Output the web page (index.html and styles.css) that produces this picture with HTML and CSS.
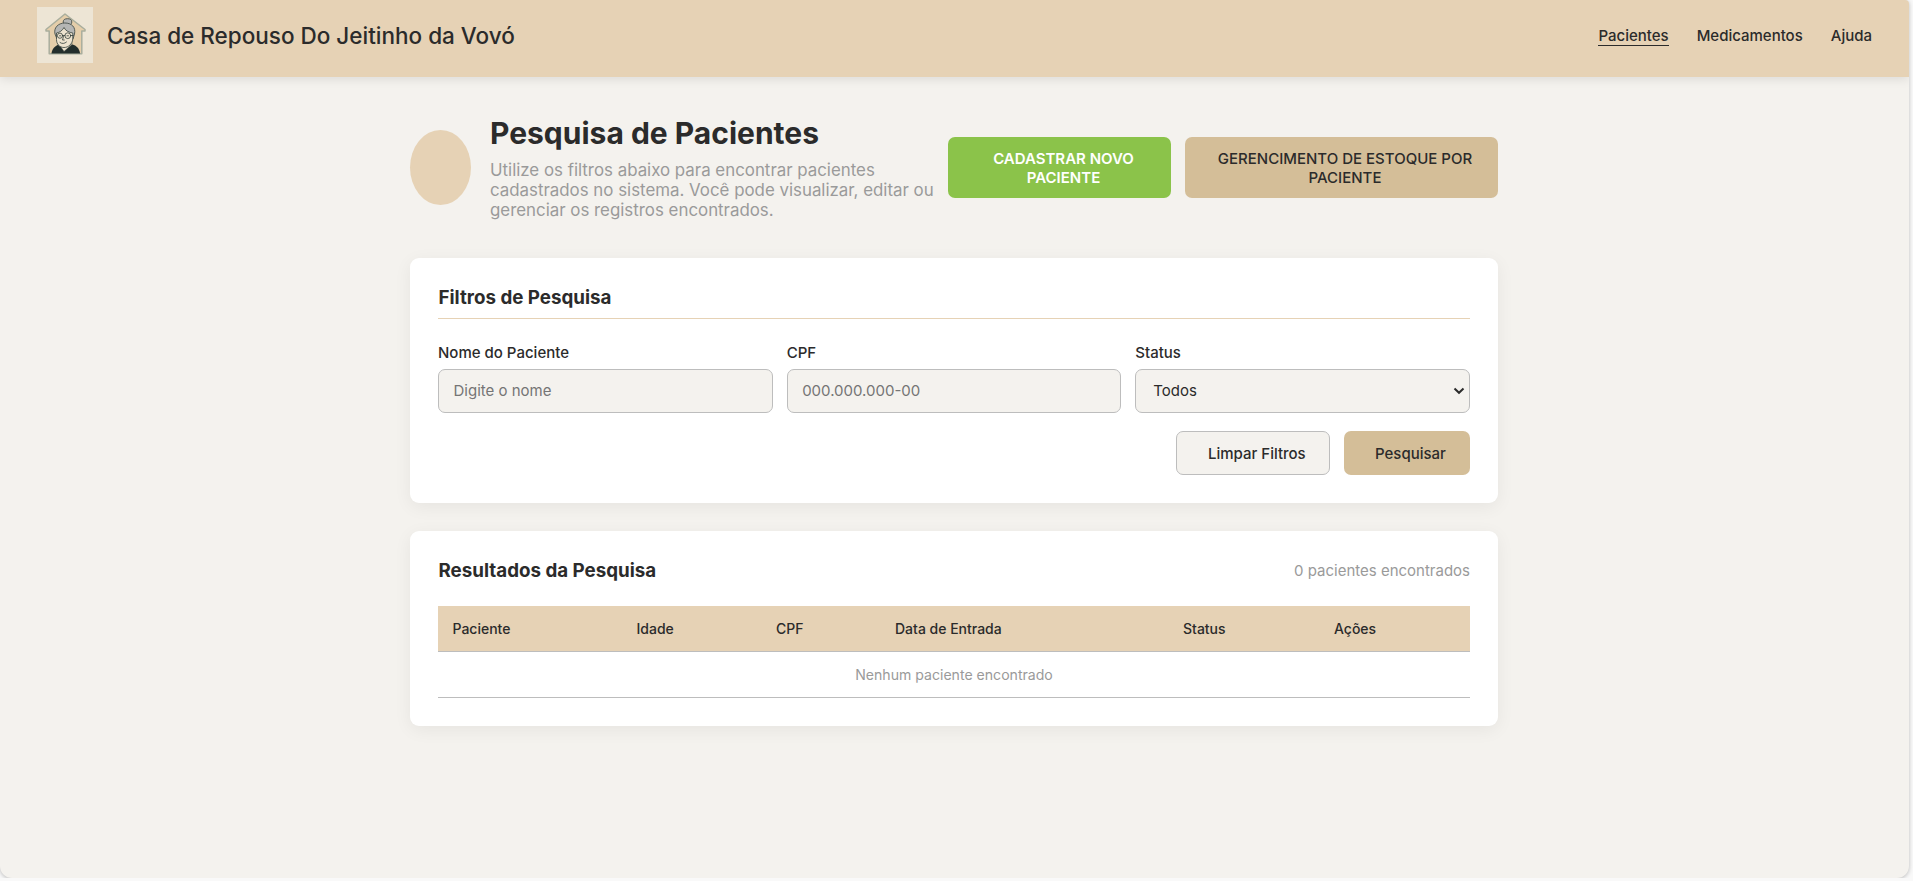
FILE: index.html
```html
<!DOCTYPE html>
<html lang="pt-BR">
<head>
<meta charset="utf-8">
<title>Pesquisa de Pacientes</title>
<link rel="stylesheet" href="styles.css">
</head>
<body>
<div class="page">
  <header class="header">
    <div class="brand">
      <svg class="logo" viewBox="0 0 56 56" aria-hidden="true">
        <rect width="56" height="56" fill="#ede5d5"/>
        <path d="M28 7 9 22.5v1.5h3.2v22.8h32.6V24H48v-1.5z" fill="#e5ceaa" stroke="#a9ae9d" stroke-width="1.5" stroke-linejoin="round"/>
        <path d="M14.500 46.500c.6-5.500 4-8 9-9.500h10c5 1 8.800 3.500 9.600 9.500z" fill="#232e2c"/>
        <path d="m22 37.500 5 7 8-7-.5-4H23z" fill="#ede3cf" stroke="#35403b" stroke-width=".6"/>
        <ellipse cx="30.500" cy="15" rx="4.300" ry="3.300" fill="#b5b6b4" stroke="#47504c" stroke-width=".9"/>
        <path d="M18 27c-1.500-6 3-11 9.800-11s11.200 4 9.700 11l-1.500 5H20z" fill="#b5b6b4" stroke="#47504c" stroke-width=".9"/>
        <path d="M19.500 26c3-.5 6-2.500 7.500-5.500 1.500 3.500 5.500 5 8.800 5.500v6c-.5 5-4.300 8.500-8.800 8.500-4.500 0-7.500-3.500-7.500-8z" fill="#ede3cf" stroke="#35403b" stroke-width=".8"/>
        <g fill="none" stroke="#35403b" stroke-width=".8" stroke-linecap="round">
          <circle cx="23" cy="28.700" r="2.600"/>
          <circle cx="30.800" cy="28.700" r="2.900"/>
          <path d="M25.600 28.500h2.300M33.700 28.500h2.500M26.500 29.500l-1 3.500h1.800M23 35.500c2 1.500 4.500 1.300 6.500-.5M22.500 28.800h1.200M30 28.800h1.500"/>
        </g>
      </svg>
      <span class="brand-name">Casa de Repouso Do Jeitinho da Vovó</span>
    </div>
    <nav class="nav">
      <a class="nav-link active">Pacientes</a>
      <a class="nav-link">Medicamentos</a>
      <a class="nav-link">Ajuda</a>
    </nav>
  </header>
  <main class="main">
    <section class="intro">
      <div class="intro-icon"></div>
      <div class="intro-text">
        <h1 class="intro-title">Pesquisa de Pacientes</h1>
        <p class="intro-desc">Utilize os filtros abaixo para encontrar pacientes cadastrados no sistema. Você pode visualizar, editar ou gerenciar os registros encontrados.</p>
      </div>
      <div class="intro-actions">
        <button class="btn-top btn-new">CADASTRAR NOVO<br>PACIENTE</button>
        <button class="btn-top btn-stock">GERENCIMENTO DE ESTOQUE POR<br>PACIENTE</button>
      </div>
    </section>
    <section class="card filters">
      <h2 class="card-title filters-title">Filtros de Pesquisa</h2>
      <div class="fields">
        <label class="field"><span class="label">Nome do Paciente</span><input class="control" type="text" placeholder="Digite o nome"></label>
        <label class="field"><span class="label">CPF</span><input class="control" type="text" placeholder="000.000.000-00"></label>
        <label class="field">
          <span class="label">Status</span>
          <span class="select-wrap">
            <select class="control select"><option>Todos</option></select>
            <svg class="chevron" viewBox="0 0 12 8" aria-hidden="true"><path d="m1.500 1.500 4.500 4.300 4.500-4.300" fill="none" stroke="#2b2b2b" stroke-width="2"/></svg>
          </span>
        </label>
      </div>
      <div class="actions">
        <button class="btn btn-clear">Limpar Filtros</button>
        <button class="btn btn-search">Pesquisar</button>
      </div>
    </section>
    <section class="card results">
      <div class="results-head">
        <h2 class="card-title">Resultados da Pesquisa</h2>
        <span class="count">0 pacientes encontrados</span>
      </div>
      <table class="table">
        <colgroup><col class="c-name"><col class="c-age"><col class="c-cpf"><col class="c-date"><col class="c-status"><col></colgroup>
        <thead><tr><th>Paciente</th><th>Idade</th><th>CPF</th><th>Data de Entrada</th><th>Status</th><th>Ações</th></tr></thead>
        <tbody><tr><td class="empty" colspan="6">Nenhum paciente encontrado</td></tr></tbody>
      </table>
    </section>
  </main>
</div>
</body>
</html>
```
FILE: styles.css
```css
* { box-sizing: border-box; margin: 0; }
body { background: #f9f9f9; font-family: Inter, "Liberation Sans", sans-serif; color: #2b2b2b; overflow: hidden; }
button, input, select { font-family: inherit; color: inherit; }

.page { width: 1909px; height: 878px; background: #f4f2ee; border-radius: 0 4px 12px 12px; box-shadow: 0 1px 4px rgba(0, 0, 0, .25); overflow: hidden; }

.header { height: 77px; padding: 7px 37px 0; display: flex; justify-content: space-between; align-items: flex-start; background: #e6d2b5; box-shadow: 0 2px 10px rgba(0, 0, 0, .1); }
.brand { display: flex; align-items: center; gap: 14px; height: 56px; }
.logo { width: 56px; height: 56px; display: block; }
.brand-name { font-size: 22.500px; font-weight: 500; white-space: nowrap; }
.nav { display: flex; align-items: center; gap: 28px; height: 56px; }
.nav-link { font-size: 15px; font-weight: 500; line-height: 18px; border-bottom: 1px solid transparent; margin-top: 2px; }
.nav-link.active { border-color: #2b2b2b; }

.main { width: 1088px; margin: 0 0 0 410px; padding-top: 37px; }
.intro { height: 116px; display: flex; align-items: center; margin-bottom: 28px; padding-bottom: 9px; }
.intro-icon { width: 61px; height: 75px; flex: none; border-radius: 50%; background: #e6d2b5; margin-right: 19px; }
.intro-text { width: 458px; flex: none; }
.intro-title { font-size: 30px; font-weight: 700; line-height: 36px; margin-bottom: 9px; }
.intro-desc { font-size: 16.860px; line-height: 20px; color: #9a9a9a; }
.intro-actions { display: flex; gap: 14px; flex: 1; }
.btn-top { height: 61px; border: 0; border-radius: 7px; font-size: 15px; font-weight: 500; line-height: 19px; white-space: nowrap; }
.btn-new { width: 223px; padding: 0 0 0 8px; background: #8bc34a; color: #fff; font-weight: 600; }
.btn-stock { width: 313px; padding: 0 0 0 7px; background: #d4be98; }

.card { background: #fff; border-radius: 9px; padding: 28px; box-shadow: 0 4px 18px rgba(0, 0, 0, .06); }
.card-title { font-size: 18.760px; font-weight: 700; line-height: 23px; padding-left: .5px; }
.filters { height: 245px; margin-bottom: 28px; }
.filters-title { height: 33px; border-bottom: 1px solid #e6d2b5; margin-bottom: 25px; }
.fields { display: grid; grid-template-columns: repeat(3, 1fr); gap: 14px; }
.field { display: flex; flex-direction: column; gap: 7px; }
.label { font-size: 15px; font-weight: 500; line-height: 18px; }
.control { width: 100%; height: 44px; border: 1px solid #bdbdbd; border-radius: 7px; background: #f4f2ee; font-size: 15px; padding: 0 14px 1px 14.500px; }
.control::placeholder { color: #757575; }
.select-wrap { display: grid; align-items: center; }
.select { grid-area: 1 / 1; appearance: none; padding-left: 17px; }
.chevron { grid-area: 1 / 1; justify-self: end; width: 12px; height: 8px; margin-right: 5px; pointer-events: none; }
.actions { display: flex; justify-content: flex-end; gap: 14px; margin-top: 18px; }
.btn { height: 44px; border-radius: 7px; font-size: 15px; font-weight: 500; text-align: left; padding: 0 0 0 31px; white-space: nowrap; }
.btn-clear { width: 154px; border: 1px solid #bdbdbd; background: #f4f2ee; }
.btn-search { width: 126px; border: 0; background: #d4be98; }

.results { height: 195px; }
.results-head { display: flex; justify-content: space-between; align-items: center; height: 23px; margin-bottom: 24px; }
.count { font-size: 15px; color: #9a9a9a; }
.table { width: 100%; table-layout: fixed; border-collapse: separate; border-spacing: 0; font-size: 14px; }
.table th, .table td { height: 46px; padding: 0 14.500px; border-bottom: 1px solid #bdbdbd; }
.table th { text-align: left; font-weight: 500; background: #e6d2b5; }
.table .empty { text-align: center; color: #9a9a9a; font-size: 14.080px; }
.c-name { width: 184px; }
.c-age { width: 139.5px; }
.c-cpf { width: 119px; }
.c-date { width: 288px; }
.c-status { width: 151px; }
```
